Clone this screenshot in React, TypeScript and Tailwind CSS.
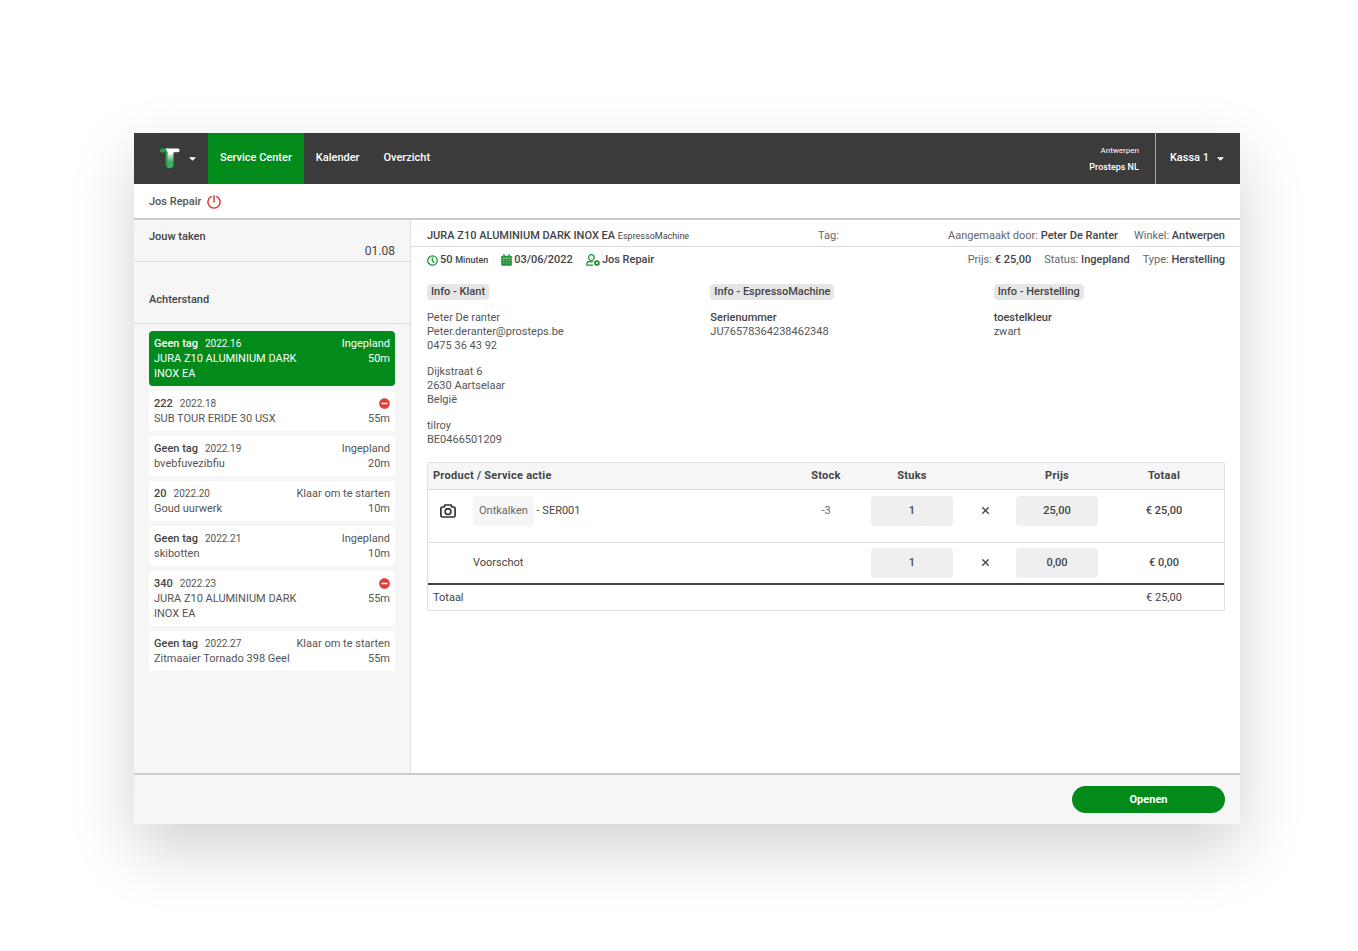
import { useState } from 'react'
import type { ReactNode } from 'react'
import { X } from 'lucide-react'
import { FaCaretDown, FaMinusCircle } from 'react-icons/fa'

type Task = {
  id: string
  tag: string
  name: string
  status: string | null
  duration: string
}

const NAV = ['Service Center', 'Kalender', 'Overzicht'] as const

const TASKS: Task[] = [
  { id: '2022.16', tag: 'Geen tag', name: 'JURA Z10 ALUMINIUM DARK INOX EA', status: 'Ingepland', duration: '50m' },
  { id: '2022.18', tag: '222', name: 'SUB TOUR ERIDE 30 USX', status: null, duration: '55m' },
  { id: '2022.19', tag: 'Geen tag', name: 'bvebfuvezibfiu', status: 'Ingepland', duration: '20m' },
  { id: '2022.20', tag: '20', name: 'Goud uurwerk', status: 'Klaar om te starten', duration: '10m' },
  { id: '2022.21', tag: 'Geen tag', name: 'skibotten', status: 'Ingepland', duration: '10m' },
  { id: '2022.23', tag: '340', name: 'JURA Z10 ALUMINIUM DARK INOX EA', status: null, duration: '55m' },
  { id: '2022.27', tag: 'Geen tag', name: 'Zitmaaier Tornado 398 Geel', status: 'Klaar om te starten', duration: '55m' },
]

function Logo() {
  return (
    <svg width="20" height="21" viewBox="0 0 20 21" aria-hidden="true">
      <defs>
        <linearGradient id="stem" x1="0" y1="0" x2="0" y2="1">
          <stop offset="0" stopColor="#ffffff" />
          <stop offset="0.35" stopColor="#a9d8b4" />
          <stop offset="0.65" stopColor="#3fa85c" />
          <stop offset="1" stopColor="#3cb55f" />
        </linearGradient>
      </defs>
      <path d="M5.5 3.5V16.3A4 4 0 0 0 9.5 20.3V3.5Z" fill="#2a9a4a" />
      <path d="M7.5 2H13.5V16.3A4 4 0 0 1 9.5 20.3C8.2 20.3 7.5 19 7.5 17.5Z" fill="url(#stem)" />
      <path d="M1.9 0.5H6.5L8 4.5H1.9A2 2 0 0 1 1.9 0.5Z" fill="#23994a" />
      <path d="M5.5 0.5H17.8A1.8 1.8 0 0 1 17.8 4.2H13.5L10.5 7.5L7.5 4Z" fill="#ffffff" />
    </svg>
  )
}

function PowerIcon() {
  return (
    <svg width="14" height="14" viewBox="0 0 14 14" fill="none" stroke="#d9302c" strokeWidth="1.4" strokeLinecap="round" aria-hidden="true">
      <path d="M4.2 1.6A6.1 6.1 0 1 0 9.8 1.6" />
      <path d="M7 0.8V7" />
    </svg>
  )
}

function ClockIcon() {
  return (
    <svg width="11" height="11" viewBox="0 0 11 11" fill="none" stroke="#1f9137" strokeWidth="1.3" strokeLinecap="round" aria-hidden="true">
      <circle cx="5.5" cy="5.5" r="4.7" />
      <path d="M5.3 2.8V5.7L7 7.3" />
    </svg>
  )
}

function CalendarIcon() {
  return (
    <svg width="11" height="12" viewBox="0 0 11 12" aria-hidden="true">
      <path d="M2.3 0.3h1.4v1.4h3.6V0.3h1.4v1.4h1.3a0.8 0.8 0 0 1 .8.8V11a0.8 0.8 0 0 1-.8.8H1A0.8 0.8 0 0 1 .2 11V2.5A0.8 0.8 0 0 1 1 1.7h1.3z" fill="#1f9137" />
      <path d="M1.4 4.2h8.2" stroke="#ffffff" strokeWidth="0.6" />
      <path d="M2.2 6.4h1.2M4.9 6.4h1.2M7.6 6.4h1.2M2.2 8.9h1.2M4.9 8.9h1.2M7.6 8.9h1.2" stroke="#b9dec1" strokeWidth="0.9" />
    </svg>
  )
}

function UserIcon() {
  return (
    <svg width="14" height="12" viewBox="0 0 14 12" fill="none" aria-hidden="true">
      <circle cx="5.4" cy="3.6" r="2.9" stroke="#1f9137" strokeWidth="1.2" />
      <path d="M7.2 11.2H0.8V10.2A2.8 2.8 0 0 1 3.4 7.4C4.6 8 6 8 7 7.5" stroke="#1f9137" strokeWidth="1.2" strokeLinejoin="round" />
      <circle cx="10.9" cy="8.9" r="1.9" stroke="#1f9137" strokeWidth="1.7" />
      <path d="M10.9 6V11.8M8.4 7.4L13.4 10.4M13.4 7.4L8.4 10.4" stroke="#1f9137" strokeWidth="1" />
      <circle cx="10.9" cy="8.9" r="1" fill="#ffffff" />
    </svg>
  )
}

function CameraIcon() {
  return (
    <svg width="16" height="14" viewBox="0 0 16 14" fill="none" stroke="#333333" strokeWidth="1.7" strokeLinejoin="round" aria-hidden="true">
      <path d="M2.5 3H4L5 1H11L12 3H13.5A1.6 1.6 0 0 1 15.1 4.6V11.4A1.6 1.6 0 0 1 13.5 13H2.5A1.6 1.6 0 0 1 0.9 11.4V4.6A1.6 1.6 0 0 1 2.5 3Z" />
      <circle cx="8" cy="7.6" r="2.9" />
    </svg>
  )
}

function TaskCard({ task, active, onSelect }: { task: Task; active: boolean; onSelect: () => void }) {
  return (
    <button
      type="button"
      onClick={onSelect}
      className={`flex w-full items-start justify-between rounded-sm p-[5px] text-left text-[11px] leading-[15px] ${
        active ? 'bg-[#028a1b] text-white' : 'bg-white text-[#555]'
      }`}
    >
      <span className="block max-w-[144px]">
        <span className="block whitespace-nowrap">
          <span className={`mr-[7px] font-medium ${active ? '' : 'text-[#444]'}`}>{task.tag}</span>
          <span className="text-[10px]">{task.id}</span>
        </span>
        <span className="block">{task.name}</span>
      </span>
      <span className="flex flex-col items-end whitespace-nowrap">
        {task.status ?? (
          <span className="flex h-[15px] items-center" title="Geblokkeerd">
            <FaMinusCircle size={11} color="#d9403c" />
          </span>
        )}
        <span>{task.duration}</span>
      </span>
    </button>
  )
}

function InfoBlock({ title, children }: { title: string; children: ReactNode }) {
  return (
    <section>
      <h2 className="inline-block rounded-sm bg-[#e6e6e6] px-1 text-[11px] leading-4 font-medium">{title}</h2>
      <div className="mt-[11px] flex flex-col gap-3 leading-[14px] text-[#555]">{children}</div>
    </section>
  )
}

function NumberField({ label, value }: { label: string; value: string }) {
  return (
    <input
      type="text"
      aria-label={label}
      defaultValue={value}
      className="mx-auto block h-[30px] w-[82px] rounded-sm bg-[#efefef] text-center font-medium outline-none"
    />
  )
}

export default function App() {
  const [selected, setSelected] = useState('2022.16')

  return (
    <div className="flex min-h-screen flex-col bg-white pt-[133px] pr-[118px] pb-[127px] pl-[134px] font-['Roboto',sans-serif] text-[11px] leading-4 text-[#444]">
      <div className="flex flex-1 flex-col bg-white shadow-[0_25px_60px_rgba(0,0,0,0.18)]">
        {/* Top bar */}
        <header className="flex h-[51px] bg-[#3b3b3b] font-medium text-white">
          <button type="button" aria-label="Menu" className="flex w-[74px] items-center gap-[7px] pl-[26px]">
            <Logo />
            <FaCaretDown size={11} />
          </button>
          <nav className="flex">
            {NAV.map((item) => (
              <a
                key={item}
                href="#"
                className={`flex items-center px-3 pb-px ${item === 'Service Center' ? 'bg-[#028a1b]' : ''}`}
              >
                {item}
              </a>
            ))}
          </nav>
          <div className="ml-auto flex flex-col items-end justify-center border-r border-[#aaa] pr-4">
            <span className="text-[8px] font-normal">Antwerpen</span>
            <span className="text-[9px]">Prosteps NL</span>
          </div>
          <button type="button" className="flex items-center gap-[6px] px-[14px] pb-px font-medium">
            Kassa 1 <FaCaretDown size={11} />
          </button>
        </header>

        {/* User bar */}
        <div className="flex h-9 items-center gap-[6px] border-b-2 border-[#ccc] pt-px pl-[15px] font-medium text-[#555]">
          Jos Repair
          <button type="button" aria-label="Afmelden">
            <PowerIcon />
          </button>
        </div>

        <div className="flex flex-1">
          {/* Task list */}
          <aside className="w-[277px] shrink-0 border-r border-[#ddd] bg-[#f6f6f6]">
            <div className="flex h-[42px] flex-col border-b border-[#e0e0e0] px-[15px] pt-[10px] leading-[14px]">
              <h2 className="font-medium">Jouw taken</h2>
              <span className="self-end text-[12px]">01.08</span>
            </div>
            <div className="flex h-[62px] items-end border-b border-[#ddd] px-[15px] pb-[15px]">
              <h2 className="font-medium">Achterstand</h2>
            </div>
            <ul className="flex flex-col gap-[5px] px-[15px] pt-[7px]">
              {TASKS.map((task) => (
                <li key={task.id}>
                  <TaskCard task={task} active={task.id === selected} onSelect={() => setSelected(task.id)} />
                </li>
              ))}
            </ul>
          </aside>

          {/* Task detail */}
          <main className="min-w-0 flex-1">
            <div className="flex h-[27px] items-center border-b border-[#ddd] pt-[6px] pr-[15px] pl-4">
              <h1 className="w-[49%] font-medium">
                JURA Z10 ALUMINIUM DARK INOX EA <small className="text-[9px] font-normal">EspressoMachine</small>
              </h1>
              <span className="text-[#666]">Tag:</span>
              <div className="ml-auto flex gap-4 text-[#666]">
                <span>Aangemaakt door: <b className="font-medium text-[#444]">Peter De Ranter</b></span>
                <span>Winkel: <b className="font-medium text-[#444]">Antwerpen</b></span>
              </div>
            </div>

            <div className="flex items-center gap-[13px] pt-[5px] pr-[15px] pl-4 font-medium">
              <span className="flex items-center gap-[2px]">
                <ClockIcon />
                <span>50 <small className="text-[9px]">Minuten</small></span>
              </span>
              <span className="flex items-center gap-[2px]">
                <CalendarIcon /> 03/06/2022
              </span>
              <span className="flex items-center gap-[2px]">
                <UserIcon /> Jos Repair
              </span>
              <div className="ml-auto flex gap-[13px] text-[#666]">
                <span className="font-normal">Prijs: <b className="font-medium text-[#444]">€ 25,00</b></span>
                <span className="font-normal">Status: <b className="font-medium text-[#444]">Ingepland</b></span>
                <span className="font-normal">Type: <b className="font-medium text-[#444]">Herstelling</b></span>
              </div>
            </div>

            <div className="grid grid-cols-3 gap-x-[52px] pt-4 pr-[15px] pl-4">
              <InfoBlock title="Info - Klant">
                <p>Peter De ranter<br />Peter.deranter@prosteps.be<br />0475 36 43 92</p>
                <p>Dijkstraat 6<br />2630 Aartselaar<br />België</p>
                <p>tilroy<br />BE0466501209</p>
              </InfoBlock>
              <InfoBlock title="Info - EspressoMachine">
                <p><b className="font-medium text-[#444]">Serienummer</b><br />JU76578364238462348</p>
              </InfoBlock>
              <InfoBlock title="Info - Herstelling">
                <p><b className="font-medium text-[#444]">toestelkleur</b><br />zwart</p>
              </InfoBlock>
            </div>

            <div className="mt-[15px] mr-[15px] ml-4 rounded-xs border border-[#e0e0e0]">
              <table className="w-full table-fixed border-collapse text-center">
                <colgroup>
                  <col className="w-[45px]" />
                  <col />
                  <col className="w-[52px]" />
                  <col className="w-[120px]" />
                  <col className="w-[26px]" />
                  <col className="w-[118px]" />
                  <col className="w-[108px]" />
                </colgroup>
                <thead>
                  <tr className="h-[26px] border-b border-[#ddd] bg-[#f6f6f6] tracking-wide">
                    <th colSpan={2} className="pl-[5px] text-left font-bold">Product / Service actie</th>
                    <th className="font-bold">Stock</th>
                    <th className="font-bold">Stuks</th>
                    <td />
                    <th className="font-bold">Prijs</th>
                    <th className="pr-3 font-bold">Totaal</th>
                  </tr>
                </thead>
                <tbody>
                  <tr className="h-[53px] border-b border-[#ddd] align-top leading-[30px]">
                    <td className="pt-[6px] pl-3">
                      <button type="button" aria-label="Foto toevoegen" className="flex h-[30px] items-center">
                        <CameraIcon />
                      </button>
                    </td>
                    <td className="pt-[6px] text-left">
                      <span className="inline-block rounded-sm bg-[#f6f6f6] px-[6px] text-[#666]">Ontkalken</span> - SER001
                    </td>
                    <td className="pt-[6px] text-[#666]">-3</td>
                    <td className="pt-[6px]"><NumberField label="Stuks Ontkalken" value="1" /></td>
                    <td className="pt-[6px]">
                      <span className="flex h-[30px] items-center justify-center"><X size={11} strokeWidth={3} /></span>
                    </td>
                    <td className="pt-[6px]"><NumberField label="Prijs Ontkalken" value="25,00" /></td>
                    <td className="pt-[6px] pr-3 font-medium">€ 25,00</td>
                  </tr>
                  <tr className="h-[42px] border-b-2 border-[#444]">
                    <td />
                    <td className="text-left">Voorschot</td>
                    <td />
                    <td><NumberField label="Stuks Voorschot" value="1" /></td>
                    <td>
                      <span className="flex items-center justify-center"><X size={11} strokeWidth={3} /></span>
                    </td>
                    <td><NumberField label="Prijs Voorschot" value="0,00" /></td>
                    <td className="pr-3 font-medium">€ 0,00</td>
                  </tr>
                </tbody>
                <tfoot>
                  <tr className="h-[26px]">
                    <td colSpan={6} className="pl-[5px] text-left">Totaal</td>
                    <td className="pr-3">€ 25,00</td>
                  </tr>
                </tfoot>
              </table>
            </div>
          </main>
        </div>

        {/* Actions */}
        <footer className="flex h-[51px] items-center justify-end border-t-2 border-[#ccc] bg-[#f6f6f6] pr-[15px]">
          <button type="button" className="h-[27px] w-[153px] rounded-full bg-[#028a1b] font-bold text-white">
            Openen
          </button>
        </footer>
      </div>
    </div>
  )
}
